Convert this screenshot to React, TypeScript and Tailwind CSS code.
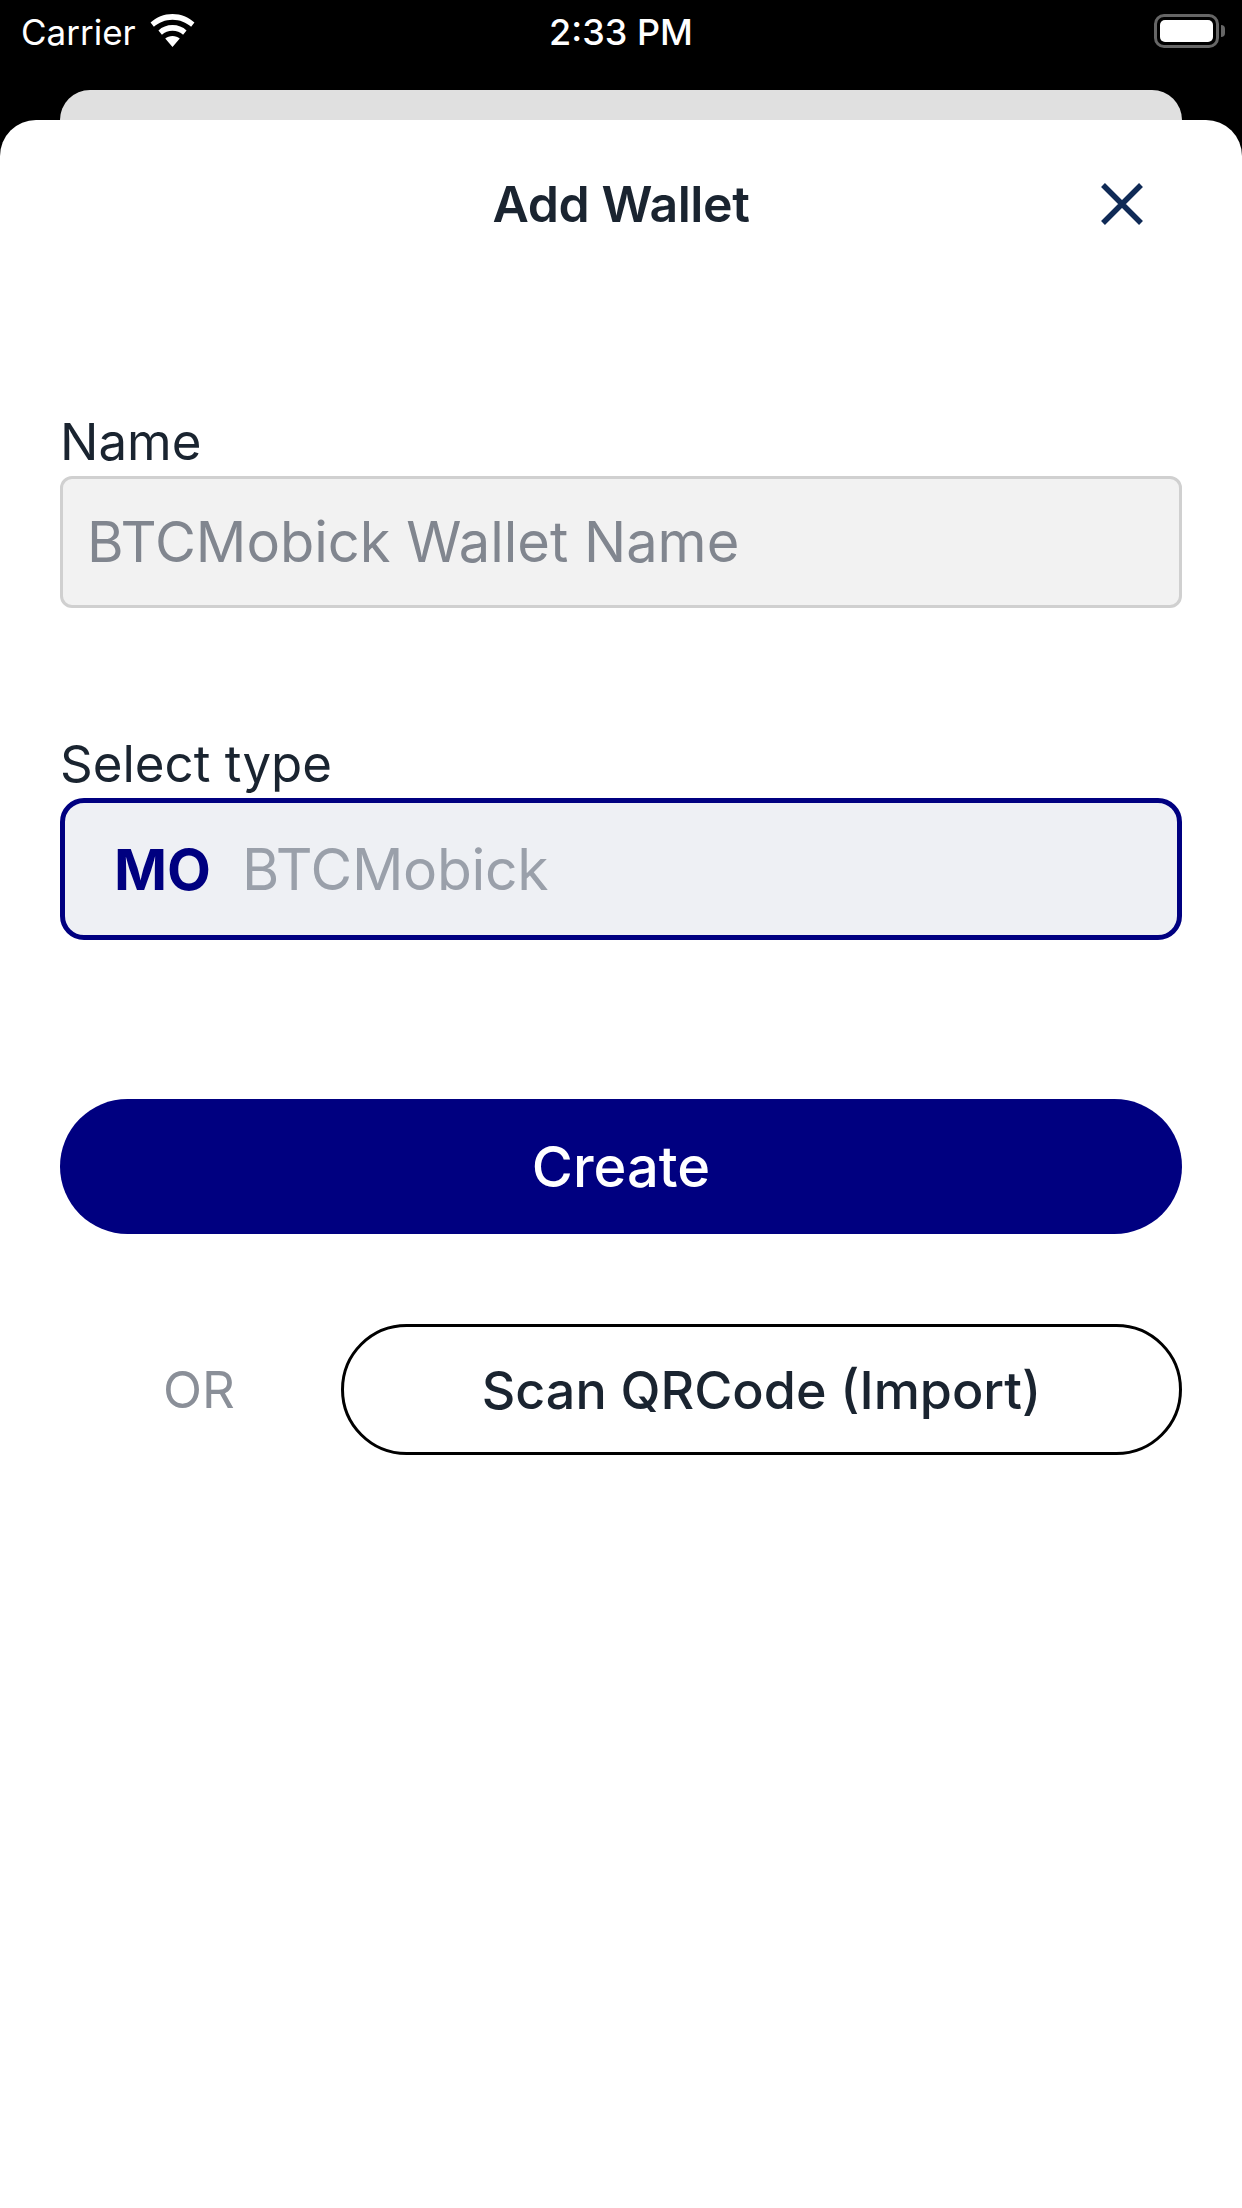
function WifiIcon() {
  return (
    <svg viewBox="0 0 46 34" className="h-[33px] w-[45px] -translate-y-[2px]" fill="#fff">
      <path d="M23 0C14.2 0 6.3 3.3 0.4 8.800L3.800 13.200C8.800 8.600 15.600 5.800 23 5.800s14.200 2.800 19.200 7.400l3.400-4.400C39.700 3.300 31.800 0 23 0z" />
      <path d="M23 11.400c-5.600 0-10.700 2.100-14.500 5.500l3.600 4.400c2.900-2.500 6.700-4 10.900-4s8 1.500 10.900 4l3.600-4.400c-3.800-3.400-8.900-5.500-14.500-5.500z" />
      <path d="M23 22.600c-2.900 0-5.500 1-7.500 2.700L23 34l7.500-8.700c-2-1.700-4.600-2.700-7.500-2.700z" />
    </svg>
  );
}

function BatteryIcon() {
  return (
    <div className="flex items-center gap-[2px]">
      <div className="h-[34px] w-[65px] rounded-[10px] border-[3px] border-[#666666] p-[3px]">
        <div className="h-full w-full rounded-[5px] bg-white" />
      </div>
      <div className="h-[12px] w-[4px] rounded-r-full bg-[#666666]" />
    </div>
  );
}

function StatusBar() {
  return (
    <div className="grid h-[90px] shrink-0 grid-cols-3 items-start pt-[10px] leading-[44px] text-white">
      <div className="flex items-center gap-[14px] pl-[21px] text-[35px]">
        <span>Carrier</span>
        <WifiIcon />
      </div>
      <div className="text-center text-[36px] font-medium">2:33 PM</div>
      <div className="flex justify-end pr-[17px] pt-[4px]">
        <BatteryIcon />
      </div>
    </div>
  );
}

function App() {
  return (
    <div className="flex h-[2208px] flex-col overflow-hidden bg-black font-['Inter',sans-serif] text-[#1a2430]">
      <StatusBar />
      <div className="mx-[60px] h-[30px] shrink-0 rounded-t-[30px] bg-[#e0e0e0]" />

      <div className="flex flex-1 flex-col rounded-t-[36px] bg-white px-[60px]">
        <div className="relative flex h-[168px] shrink-0 items-center justify-center">
          <h1 className="text-[50px] font-semibold tracking-[-0.4px]">Add Wallet</h1>
          <button className="absolute right-[39px] top-[63px] h-[42px] w-[42px] text-[#0f2a56]">
            <svg viewBox="0 0 42 42" className="h-full w-full" fill="none" stroke="currentColor" strokeWidth="5.5">
              <path d="M2 2L40 40M40 2L2 40" />
            </svg>
          </button>
        </div>

        <div className="mt-[122px] text-[51px] leading-[64px]">Name</div>
        <div className="mt-[2px] flex h-[132px] items-center rounded-[12px] border-[3px] border-[#d0d0d0] bg-[#f2f2f2] pl-[24px] text-[56px] text-[#81868f]">
          BTCMobick Wallet Name
        </div>

        <div className="mt-[124px] text-[51px] leading-[64px]">Select type</div>
        <div className="mt-[2px] flex h-[142px] items-center rounded-[24px] border-[5px] border-[#000080] bg-[#eef0f4] pl-[49px]">
          <span className="translate-y-[1px] text-[57px] font-bold text-[#000080]">MO</span>
          <span className="ml-[31px] translate-y-[1px] text-[57px] tracking-[-0.3px] text-[#9aa0aa]">BTCMobick</span>
        </div>

        <button className="mt-[159px] flex h-[135px] shrink-0 items-center justify-center rounded-[68px] bg-[#000080] text-[56px] font-medium text-white">
          Create
        </button>

        <div className="mt-[90px] flex items-center">
          <div className="w-[278px] pt-[2px] text-center text-[51px] text-[#8a8f98]">OR</div>
          <button className="ml-[3px] flex h-[131px] flex-1 items-center justify-center rounded-[66px] border-[3px] border-black bg-white pt-[2px] text-[52px] font-medium">
            Scan QRCode (Import)
          </button>
        </div>
      </div>
    </div>
  );
}

export default App;
